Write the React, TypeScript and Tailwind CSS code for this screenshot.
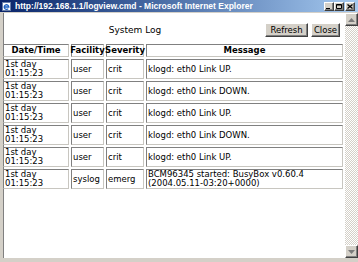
import React from 'react'

const rows = [
  { f: 'user', s: 'crit', m: 'klogd: eth0 Link UP.' },
  { f: 'user', s: 'crit', m: 'klogd: eth0 Link DOWN.' },
  { f: 'user', s: 'crit', m: 'klogd: eth0 Link UP.' },
  { f: 'user', s: 'crit', m: 'klogd: eth0 Link DOWN.' },
  { f: 'user', s: 'crit', m: 'klogd: eth0 Link UP.' },
  { f: 'syslog', s: 'emerg', m: 'BCM96345 started: BusyBox v0.60.4 (2004.05.11-03:20+0000)' },
]

const cell =
  'flex items-center border border-t-[#808080] border-l-[#808080] border-b-[#c8c6c0] border-r-[#c8c6c0] px-px leading-[9px]'
const bevel =
  'bg-[#d4d0c8] border border-t-white border-l-white border-b-[#404040] border-r-[#404040] shadow-[inset_-1px_-1px_#808080]'

function CaptionButton({ kind }: { kind: 'min' | 'max' | 'close' }) {
  return (
    <div className={`w-[10px] h-[9px] flex items-center justify-center ${bevel}`}>
      <svg width="6" height="5" viewBox="0 0 6 5">
        {kind === 'min' && <rect x="0" y="4" width="4" height="1" fill="#000" />}
        {kind === 'max' && <path d="M0.5 0.5h5v4h-5z M0.5 1h5" stroke="#000" strokeWidth="1" fill="none" />}
        {kind === 'close' && <path d="M0.5 0.5l5 4M5.5 0.5l-5 4" stroke="#000" strokeWidth="1.3" />}
      </svg>
    </div>
  )
}

function ScrollArrow({ up }: { up?: boolean }) {
  return (
    <div className={`w-[13px] h-[13px] flex items-center justify-center ${bevel}`}>
      <svg width="7" height="4" viewBox="0 0 7 4">
        <path d={up ? 'M3.5 0L7 4H0z' : 'M0 0h7L3.5 4z'} fill="#7a7a7a" />
      </svg>
    </div>
  )
}

export default function App() {
  return (
    <div className="w-[358px] h-[262px] bg-[#d4d0c8] flex flex-col overflow-hidden font-['DejaVu_Sans',sans-serif] text-black">
      <div className="h-[12px] flex items-center bg-linear-to-r from-[#0a246a] to-[#a6caf0] pl-[2px] pr-[3px]">
        <svg width="9" height="9" viewBox="0 0 9 9" className="shrink-0">
          <rect x="0.5" y="0.5" width="8" height="8" fill="#fff" stroke="#6a7fa8" />
          <path d="M2.2 5h4.6a2.3 2.3 0 1 0-0.6 1.6" stroke="#1b5fc1" strokeWidth="1.3" fill="none" />
        </svg>
        <span className="ml-[4px] flex-1 text-white font-bold text-[8.5px] leading-none font-['Liberation_Sans',sans-serif] whitespace-nowrap">
          http://192.168.1.1/logview.cmd - Microsoft Internet Explorer
        </span>
        <div className="flex items-center">
          <CaptionButton kind="min" />
          <CaptionButton kind="max" />
          <div className="ml-[1px]">
            <CaptionButton kind="close" />
          </div>
        </div>
      </div>
      <div className="h-[1px]" />
      <div className="flex-1 flex pl-[3px] mb-[4px] min-h-0">
        <div className="flex-1 bg-white border-l border-[#808080] flex flex-col min-w-0">
          <div className="flex items-center pt-[10px] pr-[5px] mb-[7px]">
            <div className="flex-1 text-center text-[9px] leading-none pl-[1px]">System Log</div>
            <button className={`w-[43px] h-[14px] text-[8.5px] leading-none ${bevel}`}>Refresh</button>
            <button className={`ml-[3px] w-[29px] h-[14px] text-[8.5px] leading-none ${bevel}`}>Close</button>
          </div>
          <div className="-ml-px mr-[2px] grid grid-cols-[66px_33px_38px_1fr] gap-[2px] text-[8.5px]">
            {['Date/Time', 'Facility', 'Severity', 'Message'].map((h) => (
              <div key={h} className={`${cell} h-[13px] justify-center font-bold`}>
                {h}
              </div>
            ))}
            {rows.map((r, i) => (
              <React.Fragment key={i}>
                <div className={`${cell} h-[20px]`}>
                  1st day
                  <br />
                  01:15:23
                </div>
                <div className={`${cell} h-[20px]`}>{r.f}</div>
                <div className={`${cell} h-[20px]`}>{r.s}</div>
                <div className={`${cell} h-[20px]`}>{r.m}</div>
              </React.Fragment>
            ))}
          </div>
        </div>
        <div className="w-[13px] flex flex-col bg-[image:repeating-conic-gradient(#d4d0c8_0_25%,#ffffff_0_50%)] bg-[length:2px_2px]">
          <ScrollArrow up />
          <div className="flex-1" />
          <ScrollArrow />
        </div>
      </div>
    </div>
  )
}
